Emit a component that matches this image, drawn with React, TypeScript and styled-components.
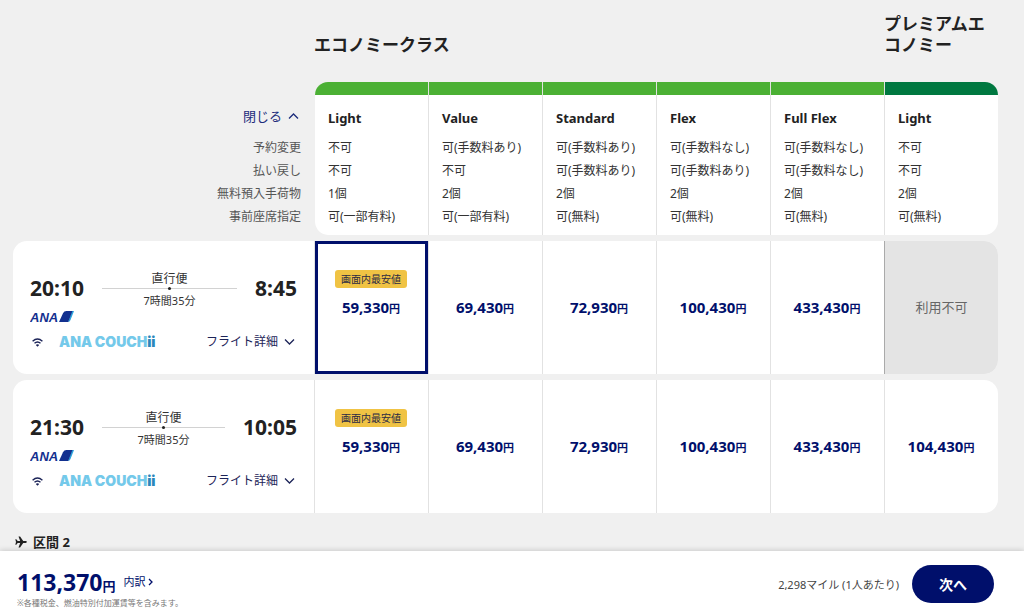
import React, { useState } from "react";
import styled, { createGlobalStyle } from "styled-components";

const navy = "#000f6b";
const line = "#e2e2e2";

const GlobalStyle = createGlobalStyle`
  *, *::before, *::after { box-sizing: border-box; }
  body {
    margin: 0;
    background: #f0f0f0;
    color: #222;
    font-family: "Noto Sans", "Noto Sans CJK JP", sans-serif;
    font-size: 12px;
  }
  button { font: inherit; color: inherit; background: none; border: 0; padding: 0; cursor: pointer; }
  a { color: inherit; text-decoration: none; }
`;

const Page = styled.div`
  min-height: 100vh;
  display: flex;
  flex-direction: column;
`;

const Main = styled.main`
  flex: 1;
  padding: 13px 26px 0 13px;
`;

const FareTable = styled.table`
  width: 100%;
  table-layout: fixed;
  border-collapse: separate;
  border-spacing: 0;
`;

const LabelCol = styled.col`
  width: 301px;
`;

const CabinTitle = styled.th`
  padding: 0 0 27px;
  vertical-align: bottom;
  text-align: left;
  font-size: 17px;
  line-height: 21px;
  font-weight: 700;
`;

const ToggleCell = styled.td`
  padding: 22px 15px 8px 0;
  text-align: right;
`;

const ToggleButton = styled.button`
  display: inline-flex;
  align-items: center;
  gap: 6px;
  color: #1c2c7c;
  font-size: 13px;
  line-height: 24px;
`;

const FareHead = styled.th<{ $bar: string }>`
  padding: 0 0 6px;
  background: #fff;
  border-left: 1px solid ${line};
  text-align: left;
  vertical-align: top;
  font-size: 13px;
  line-height: 24px;
  font-weight: 700;

  &::before {
    content: "";
    display: block;
    height: 13px;
    margin-bottom: 11px;
    background: ${(p) => p.$bar};
  }
  &:nth-child(2) { border-left-color: transparent; background-clip: padding-box; border-top-left-radius: 15px; }
  &:nth-child(2)::before { border-top-left-radius: 14px; }
  &:last-child, &:last-child::before { border-top-right-radius: 14px; }
`;

const FareName = styled.span`
  padding-left: 13px;
`;

const RuleLabel = styled.th`
  padding: 0 13px 0 0;
  text-align: right;
  font-weight: 400;
  line-height: 23px;
  color: #555;
`;

const RuleValue = styled.td`
  padding: 0 0 0 13px;
  background: #fff;
  border-left: 1px solid ${line};
  line-height: 23px;
  white-space: nowrap;
  color: #333;

  &:nth-child(2) { border-left-color: transparent; background-clip: padding-box; }
  tr:last-child > & { padding-bottom: 7px; }
  tr:last-child > &:nth-child(2) { border-bottom-left-radius: 14px; }
  tr:last-child > &:last-child { border-bottom-right-radius: 14px; }
`;

const LastLabel = styled(RuleLabel)`
  padding-bottom: 7px;
`;

const FlightList = styled.ul`
  list-style: none;
  margin: 6px 0 0;
  padding: 0;
  display: grid;
  gap: 6px;
`;

const FlightCard = styled.li`
  display: grid;
  grid-template-columns: 301px repeat(6, minmax(0, 1fr));
  background: #fff;
  border-radius: 14px;
  overflow: hidden;
`;

const FlightInfo = styled.div`
  display: flex;
  flex-direction: column;
  padding: 27px 17px 22px;
`;

const Schedule = styled.div`
  display: flex;
  align-items: center;
  gap: 18px;
`;

const Time = styled.time`
  padding-bottom: 2px;
  font-size: 21px;
  line-height: 28px;
  font-weight: 700;
`;

const Leg = styled.div`
  flex: 1;
  padding-top: 3px;
  text-align: center;
  line-height: 16px;
  color: #333;
`;

const LegLine = styled.div`
  display: flex;
  justify-content: center;
  align-items: center;
  height: 1px;
  margin: 1px 0 4px;
  background: #d2d2d2;

  &::before {
    content: "";
    width: 3px;
    height: 3px;
    flex: none;
    border-radius: 50%;
    background: #222;
  }
`;

const Duration = styled.div`
  font-size: 11px;
`;

const Airline = styled.div`
  display: flex;
  height: 14px;
  margin-top: 1px;
`;

const Services = styled.div`
  display: flex;
  align-items: center;
  height: 20px;
  margin-top: 8px;
  padding-left: 2px;
`;

const Couch = styled.span`
  margin-left: 16px;
  font-family: Inter, sans-serif;
  font-weight: 900;
  font-size: 14px;
  line-height: 20px;
  color: #74c9ea;
`;

const CouchMark = styled.span`
  color: #2b87bb;
`;

const DetailButton = styled.button`
  display: inline-flex;
  align-items: center;
  gap: 6px;
  margin-left: auto;
  padding-right: 2px;
  line-height: 20px;
  color: #1c2458;
`;

const FareCell = styled.div`
  display: grid;
  border-left: 1px solid ${line};
`;

const FareButton = styled.button<{ $selected: boolean }>`
  display: flex;
  flex-direction: column;
  align-items: center;
  justify-content: center;
  padding-right: 1px;
  border: 3px solid ${(p) => (p.$selected ? navy : "transparent")};
  color: ${navy};
`;

const Badge = styled.span`
  height: 18px;
  margin-bottom: 8px;
  padding: 0 6px;
  border-radius: 3px;
  background: #f0c344;
  font-size: 10px;
  line-height: 18px;
  white-space: nowrap;
  color: #2a2a44;

  & + span { margin-bottom: 26px; }
`;

const Price = styled.span`
  font-size: 15px;
  line-height: 22px;
  font-weight: 700;
`;

const Yen = styled.span`
  font-size: 11px;
`;

const SoldOut = styled.div`
  display: grid;
  place-items: center;
  padding-bottom: 2px;
  background: #e4e4e4;
  border-left: 1px solid #aaa;
  font-size: 13px;
  color: #666;
`;

const SectionTitle = styled.h2`
  display: flex;
  align-items: center;
  gap: 6px;
  margin: 20px 0 0;
  padding-left: 2px;
  font-size: 13px;
  line-height: 18px;
  font-weight: 700;
`;

const Footer = styled.footer`
  position: sticky;
  bottom: 0;
  display: flex;
  align-items: center;
  justify-content: space-between;
  height: 59px;
  padding: 0 30px 0 17px;
  background: #fff;
  box-shadow: 0 -1px 5px rgba(0, 0, 0, 0.16);
`;

const Summary = styled.div`
  padding-top: 14px;
`;

const TotalRow = styled.div`
  display: flex;
  align-items: center;
  gap: 8px;
  line-height: 30px;
  color: ${navy};
`;

const Total = styled.strong`
  height: 30px;
  font-size: 23px;
`;

const TotalYen = styled.span`
  font-size: 13px;
`;

const Breakdown = styled.a`
  display: inline-flex;
  align-items: center;
  gap: 2px;
  font-size: 11px;
  line-height: 20px;
`;

const Note = styled.p`
  margin: 0;
  font-size: 8px;
  line-height: 12px;
  color: #777;
`;

const Actions = styled.div`
  display: flex;
  align-items: center;
  gap: 13px;
  padding-top: 7px;
`;

const Miles = styled.span`
  font-size: 11px;
  color: #444;
`;

const NextButton = styled.button`
  width: 82px;
  height: 38px;
  border-radius: 19px;
  background: ${navy};
  color: #fff;
  font-size: 14px;
  font-weight: 700;
`;

const Chevron = ({ d, w, h }: { d: string; w: number; h: number }) => (
  <svg width={w} height={h} viewBox={`0 0 ${w} ${h}`} fill="none" stroke="currentColor" strokeWidth="1.3" aria-hidden="true">
    <path d={d} />
  </svg>
);

const AnaLogo = () => (
  <svg width="45" height="14" viewBox="0 0 45 14" role="img" aria-label="ANA">
    <text x="0" y="12" fontFamily="Liberation Sans, sans-serif" fontSize="13" fontWeight="700" fontStyle="italic" fill="#14308f">
      ANA
    </text>
    <path d="M38 12 L42 1 H44 L40.500 10 Q39.700 12 38 12 Z" fill="#2ba3dc" />
    <path d="M29 12 L33 3.200 Q34 1 36.500 1 H42.500 L38.200 12 Z" fill="#12308f" />
  </svg>
);

const WifiIcon = () => (
  <svg width="11" height="9" viewBox="0 0 11 9" fill="none" stroke="#1c2458" strokeWidth="1.400" role="img" aria-label="Wi-Fi">
    <path d="M0.600 3.200 Q5.500 -1.200 10.400 3.200" />
    <path d="M2.500 5.300 Q5.500 2.600 8.500 5.300" />
    <path d="M5.500 8.800 L3.800 6.900 Q5.500 5.600 7.200 6.900 Z" fill="#1c2458" stroke="none" />
  </svg>
);

const PlaneIcon = () => (
  <svg width="12" height="12" viewBox="0 0 12 12" fill="#222" aria-hidden="true">
    <path d="M0.300 3.300 H1.300 L2.700 5.100 H5.200 L3.500 0.500 H5.100 L8.200 5.100 H10.600 Q11.900 5.200 11.900 6 Q11.900 6.800 10.600 6.900 H8.200 L5.100 11.500 H3.500 L5.200 6.900 H2.700 L1.300 8.700 H0.300 L1 6 Z" />
  </svg>
);

const light = "#4bb034";
const dark = "#007840";

const fares = [
  { name: "Light", bar: light },
  { name: "Value", bar: light },
  { name: "Standard", bar: light },
  { name: "Flex", bar: light },
  { name: "Full Flex", bar: light },
  { name: "Light", bar: dark },
];

const rules = [
  { label: "予約変更", values: ["不可", "可(手数料あり)", "可(手数料あり)", "可(手数料なし)", "可(手数料なし)", "不可"] },
  { label: "払い戻し", values: ["不可", "不可", "可(手数料あり)", "可(手数料あり)", "可(手数料なし)", "不可"] },
  { label: "無料預入手荷物", values: ["1個", "2個", "2個", "2個", "2個", "2個"] },
  { label: "事前座席指定", values: ["可(一部有料)", "可(一部有料)", "可(無料)", "可(無料)", "可(無料)", "可(無料)"] },
];

const flights = [
  { dep: "20:10", arr: "8:45", prices: ["59,330", "69,430", "72,930", "100,430", "433,430", null] },
  { dep: "21:30", arr: "10:05", prices: ["59,330", "69,430", "72,930", "100,430", "433,430", "104,430"] },
];

export default function App() {
  const [selected, setSelected] = useState("0-0");
  const [open, setOpen] = useState(true);

  return (
    <Page>
      <GlobalStyle />
      <Main>
        <FareTable>
          <colgroup>
            <LabelCol />
            {fares.map((_, i) => (
              <col key={i} />
            ))}
          </colgroup>
          <thead>
            <tr>
              <td />
              <CabinTitle colSpan={5} scope="colgroup">エコノミークラス</CabinTitle>
              <CabinTitle scope="colgroup">プレミアムエコノミー</CabinTitle>
            </tr>
            <tr>
              <ToggleCell>
                <ToggleButton type="button" aria-expanded={open} onClick={() => setOpen(!open)}>
                  閉じる
                  <Chevron w={11} h={6} d="M1 5.500 L5.500 1 L10 5.500" />
                </ToggleButton>
              </ToggleCell>
              {fares.map((f, i) => (
                <FareHead key={i} scope="col" $bar={f.bar}>
                  <FareName>{f.name}</FareName>
                </FareHead>
              ))}
            </tr>
          </thead>
          {open && (
            <tbody>
              {rules.map((r, i) => {
                const Label = i === rules.length - 1 ? LastLabel : RuleLabel;
                return (
                  <tr key={r.label}>
                    <Label scope="row">{r.label}</Label>
                    {r.values.map((v, j) => (
                      <RuleValue key={j}>{v}</RuleValue>
                    ))}
                  </tr>
                );
              })}
            </tbody>
          )}
        </FareTable>

        <FlightList>
          {flights.map((f, row) => (
            <FlightCard key={f.dep}>
              <FlightInfo>
                <Schedule>
                  <Time>{f.dep}</Time>
                  <Leg>
                    直行便
                    <LegLine />
                    <Duration>7時間35分</Duration>
                  </Leg>
                  <Time>{f.arr}</Time>
                </Schedule>
                <Airline>
                  <AnaLogo />
                </Airline>
                <Services>
                  <WifiIcon />
                  <Couch>
                    ANA COUCH<CouchMark>ii</CouchMark>
                  </Couch>
                  <DetailButton type="button">
                    フライト詳細
                    <Chevron w={11} h={6} d="M1 0.500 L5.500 5 L10 0.500" />
                  </DetailButton>
                </Services>
              </FlightInfo>
              {f.prices.map((price, i) => {
                const id = `${row}-${i}`;
                if (!price) return <SoldOut key={id}>利用不可</SoldOut>;
                return (
                  <FareCell key={id}>
                    <FareButton
                      type="button"
                      $selected={selected === id}
                      aria-pressed={selected === id}
                      onClick={() => setSelected(id)}
                    >
                      {i === 0 && <Badge>画面内最安値</Badge>}
                      <Price>
                        {price}
                        <Yen>円</Yen>
                      </Price>
                    </FareButton>
                  </FareCell>
                );
              })}
            </FlightCard>
          ))}
        </FlightList>

        <SectionTitle>
          <PlaneIcon />
          区間 2
        </SectionTitle>
      </Main>

      <Footer>
        <Summary>
          <TotalRow>
            <Total>
              113,370<TotalYen>円</TotalYen>
            </Total>
            <Breakdown href="#breakdown">
              内訳
              <Chevron w={5} h={8} d="M1 1 L4 4 L1 7" />
            </Breakdown>
          </TotalRow>
          <Note>※各種税金、燃油特別付加運賃等を含みます。</Note>
        </Summary>
        <Actions>
          <Miles>2,298マイル (1人あたり)</Miles>
          <NextButton type="button">次へ</NextButton>
        </Actions>
      </Footer>
    </Page>
  );
}
